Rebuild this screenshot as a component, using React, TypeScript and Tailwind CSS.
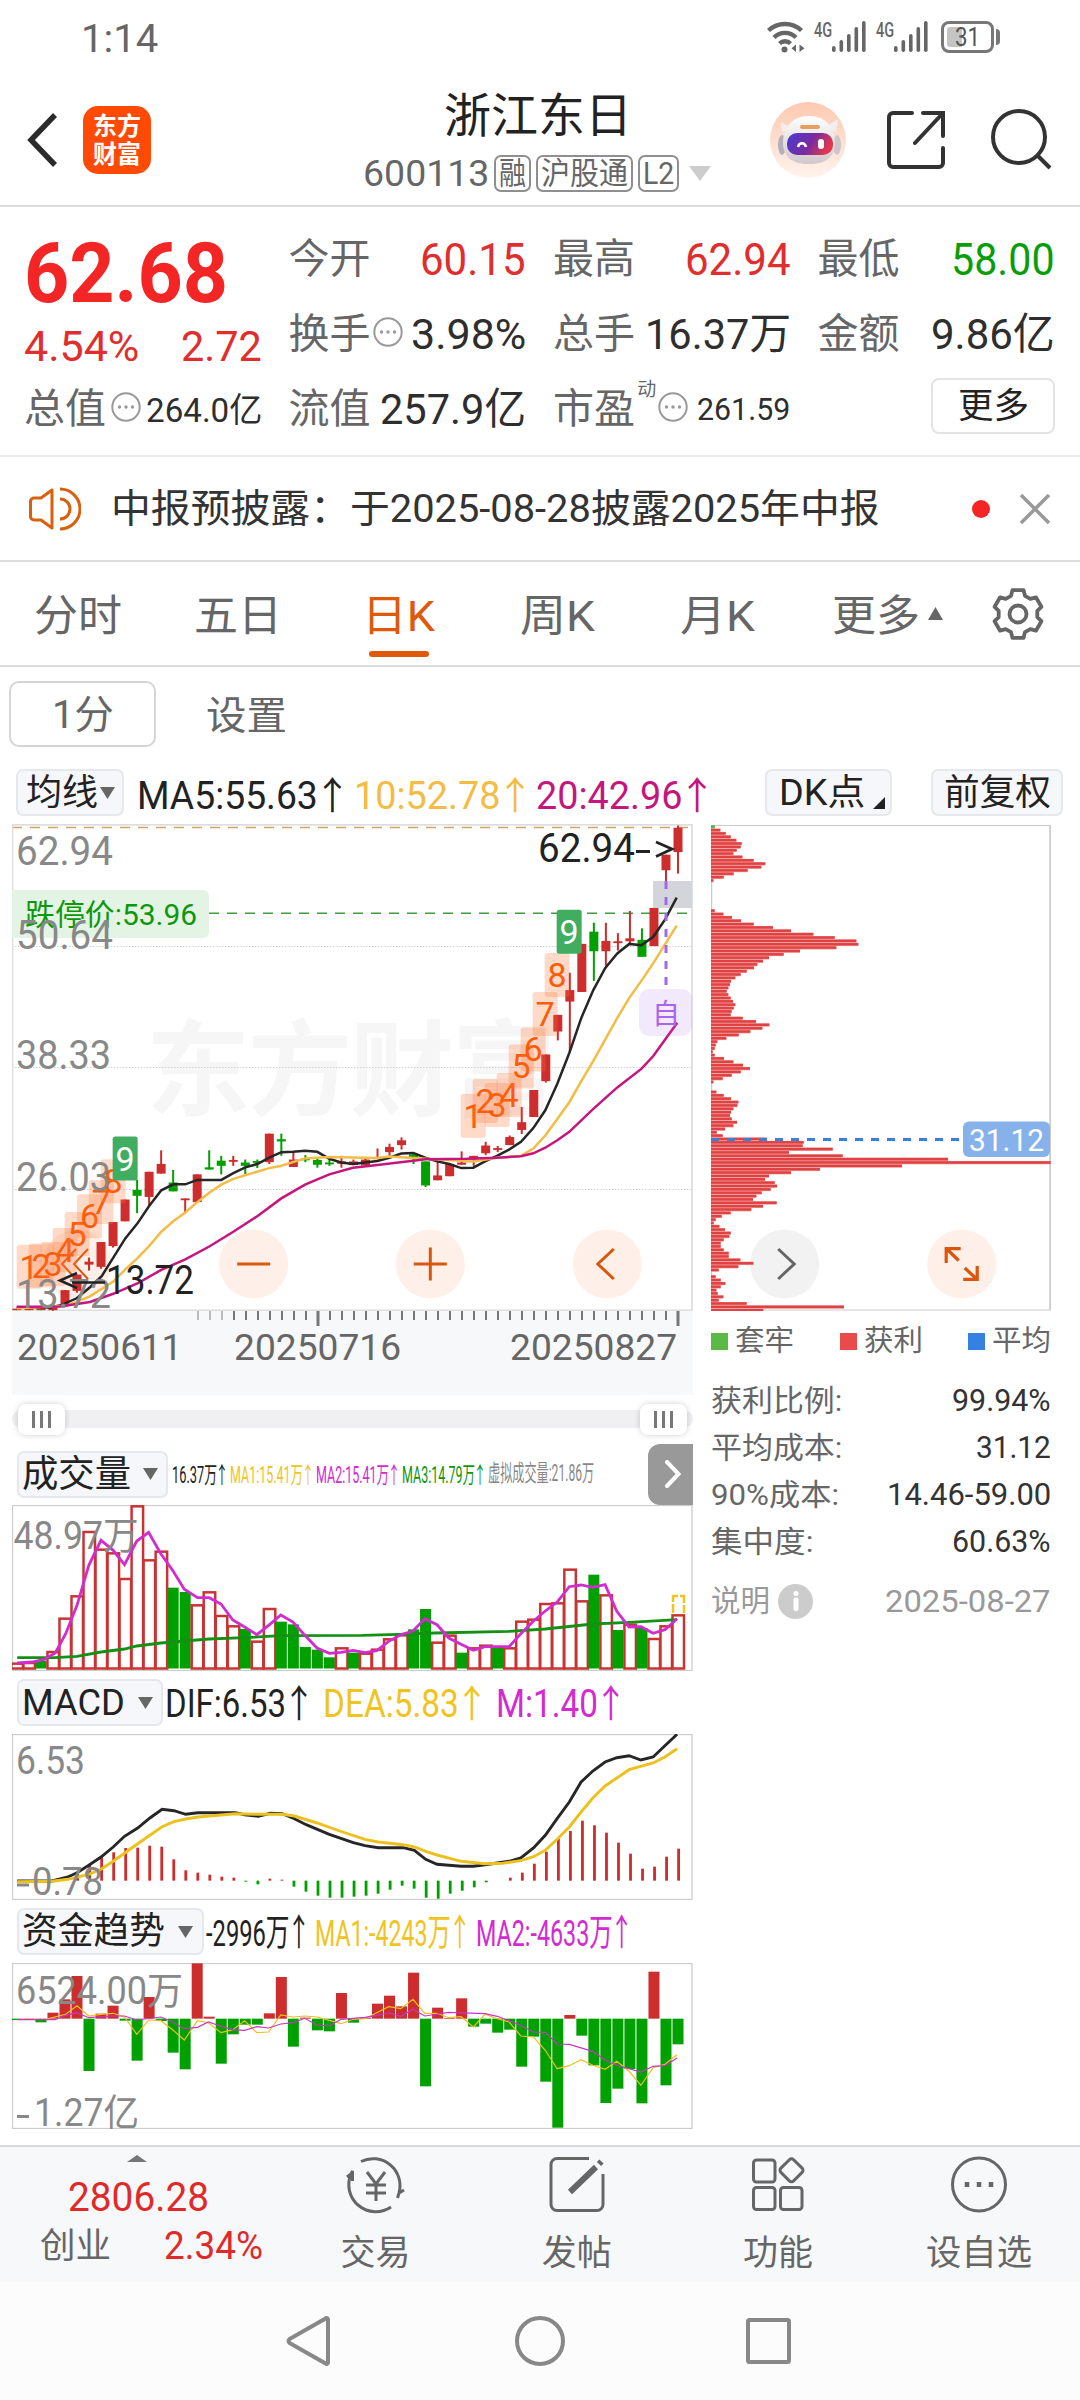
import { useLayoutEffect, useRef, useState } from 'react';
import type { ReactNode } from 'react';

const RED = '#cd2d2d';
const GREEN = '#00a000';
const FONT = 'Roboto, "Noto Sans CJK SC", sans-serif';

type Point = [number, number];

interface FitProps {
  w: number;
  className?: string;
  children: ReactNode;
}

// Squeezes or stretches a line of text horizontally so that it fills `w` pixels.
function Fit({ w, className = '', children }: FitProps) {
  const ref = useRef<HTMLSpanElement>(null);
  const [scale, setScale] = useState(1);

  useLayoutEffect(() => {
    if (ref.current) {
      setScale(w / ref.current.offsetWidth);
    }
  }, [w]);

  return (
    <span className={`block shrink-0 leading-none ${className}`} style={{ width: w }}>
      <span
        ref={ref}
        className="inline-block origin-left whitespace-nowrap leading-none"
        style={{ transform: `scaleX(${scale})` }}
      >
        {children}
      </span>
    </span>
  );
}

function Up() {
  return (
    <span className="ml-[0.08em] inline-flex w-[0.62em] justify-center font-['Noto_Sans_CJK_SC']">↑</span>
  );
}

function Caret({ className = '' }: { className?: string }) {
  return (
    <svg width="15" height="12" viewBox="0 0 15 12" className={className}>
      <path d="M0 0h15L7.5 12z" fill="#666" />
    </svg>
  );
}

function InfoDots({ className = '' }: { className?: string }) {
  return (
    <svg width="30" height="30" viewBox="0 0 30 30" className={`-mt-[6px] shrink-0 ${className}`}>
      <circle cx="15" cy="15" r="13.7" fill="none" stroke="#999" strokeWidth="2" />
      <circle cx="8.5" cy="15" r="1.7" fill="#999" />
      <circle cx="15" cy="15" r="1.7" fill="#999" />
      <circle cx="21.5" cy="15" r="1.7" fill="#999" />
    </svg>
  );
}

/* ---------- status bar and header ---------- */

function Signal() {
  return (
    <div className="flex items-start">
      <Fit w={18} className="-mt-px text-[21px] font-medium text-[#666]">4G</Fit>
      <svg width="35" height="31" viewBox="0 0 35 31" fill="#666">
        <rect x="0" y="25" width="3.6" height="6" rx="1.8" />
        <rect x="7.5" y="19" width="3.6" height="12" rx="1.8" />
        <rect x="15" y="13" width="3.6" height="18" rx="1.8" />
        <rect x="22.5" y="6" width="3.6" height="25" rx="1.8" />
        <rect x="30" y="0" width="3.6" height="31" rx="1.8" />
      </svg>
    </div>
  );
}

function StatusBar() {
  return (
    <div className="flex h-[70px] shrink-0 items-start pl-[81px] pr-[80px] pt-[20px]">
      <Fit w={77} className="text-[39px] text-[#666]">1:14</Fit>
      <div className="ml-auto flex items-start gap-[9px] pt-px">
        <svg width="38" height="32" viewBox="0 0 38 32" fill="none" stroke="#666" strokeWidth="4.4">
          <path d="M1.5 9.5a24 24 0 0 1 33 0" />
          <path d="M7 16.5a15.500 15.500 0 0 1 22 0" />
          <path d="M12.500 22.500a8 8 0 0 1 11 0" />
          <circle cx="17.500" cy="28.500" r="3" fill="#666" stroke="none" />
          <path d="M29 23.500v7.500l-4.500-3.700zM32.500 23.500v7.500l5-3.700z" fill="#666" stroke="none" />
        </svg>
        <Signal />
        <Signal />
        <div className="ml-[3px] flex items-center">
          <div className="relative flex h-[32px] w-[53px] items-center justify-center rounded-[8px] border-[3px] border-[#777]">
            <div className="absolute left-[3px] top-[3px] h-[20px] w-[15px] rounded-l-[3px] bg-[#c4c4c4]" />
            <Fit w={25} className="relative text-[25px] text-[#555]">31</Fit>
          </div>
          <div className="ml-[2px] h-[16px] w-[4px] rounded-r bg-[#777]" />
        </div>
      </div>
    </div>
  );
}

function Robot() {
  return (
    <svg width="76" height="76" viewBox="0 0 76 76">
      <defs>
        <linearGradient id="halo" x1="0" y1="0" x2="0" y2="1">
          <stop offset="0" stopColor="#fdc9b0" />
          <stop offset="1" stopColor="#fff3ed" />
        </linearGradient>
        <linearGradient id="visor" x1="0" y1="0" x2="1" y2="0.3">
          <stop offset="0" stopColor="#4a3bd0" />
          <stop offset="0.6" stopColor="#7a2aa0" />
          <stop offset="1" stopColor="#e0384f" />
        </linearGradient>
        <linearGradient id="helmet" x1="0" y1="0" x2="0" y2="1">
          <stop offset="0" stopColor="#fff" />
          <stop offset="1" stopColor="#cfc8cc" />
        </linearGradient>
      </defs>
      <circle cx="38" cy="38" r="38" fill="url(#halo)" />
      <path d="M12 30l-1-10 10 6zM66 30l2-13-12 8z" fill="#f3eff0" />
      <ellipse cx="12" cy="43" rx="4" ry="10" fill="#b5afbb" />
      <ellipse cx="67" cy="43" rx="4" ry="10" fill="#cfc6cc" />
      <path d="M39 14c17 0 26 12 26 27 0 14-9 21-26 21S13 55 13 41c0-15 9-27 26-27z" fill="url(#helmet)" />
      <rect x="30" y="23" width="20" height="4" rx="2" fill="#e8a05f" />
      <rect x="17" y="31" width="46" height="22" rx="10" fill="url(#visor)" />
      <path d="M28 45c1-5 7-5 8 0" fill="none" stroke="#fff" strokeWidth="2.500" />
      <rect x="48" y="37" width="6" height="10" rx="3" fill="#fff" />
    </svg>
  );
}

function Tag({ w, children }: { w: number; children: ReactNode }) {
  return (
    <span className="flex h-[37px] items-center rounded-[7px] border-2 border-[#8f8f8f] px-[3px] text-[31px] text-[#666]">
      <Fit w={w}>{children}</Fit>
    </span>
  );
}

function Header() {
  return (
    <header className="flex h-[137px] shrink-0 border-b-2 border-[#dcdcdc]">
      <div className="flex w-[340px] items-start pl-[27px] pt-[36px]">
        <svg width="31" height="54" viewBox="0 0 31 54" className="mt-[7px]">
          <path d="M28 2L4 27l24 25" fill="none" stroke="#2b2b2b" strokeWidth="5.500" />
        </svg>
        <div className="ml-[25px] flex h-[68px] w-[68px] flex-col items-center justify-center gap-[3px] rounded-[15px] bg-[#ff4a03] text-[25px] font-bold text-white">
          <Fit w={48}>东方</Fit>
          <Fit w={48}>财富</Fit>
        </div>
      </div>
      <div className="flex w-[396px] flex-col items-center">
        <Fit w={188} className="mt-[22px] text-[47px] text-[#222]">浙江东日</Fit>
        <div className="mr-[2px] mt-[16px] flex items-center gap-[5px]">
          <Fit w={126} className="text-[36px] text-[#666]">600113</Fit>
          <Tag w={27}>融</Tag>
          <Tag w={87}>沪股通</Tag>
          <Tag w={31}>L2</Tag>
          <svg width="22" height="15" viewBox="0 0 22 15" className="ml-[5px]">
            <path d="M0 0h22L11 15z" fill="#ccc" />
          </svg>
        </div>
      </div>
      <div className="flex w-[344px] items-start pl-[34px] pt-[32px]">
        <Robot />
        <svg width="58" height="58" viewBox="0 0 58 58" fill="none" stroke="#333" strokeWidth="4" className="ml-[41px] mt-[9px]">
          <path d="M25 2H6a4 4 0 0 0-4 4v46a4 4 0 0 0 4 4h46a4 4 0 0 0 4-4V37" strokeLinecap="round" />
          <path d="M36 2h20v23M56 2L28 32" strokeLinecap="round" />
        </svg>
        <svg width="61" height="61" viewBox="0 0 61 61" fill="none" stroke="#333" strokeWidth="4" className="ml-[46px] mt-[7px]">
          <circle cx="28" cy="28" r="26" />
          <path d="M47 47l12 12" />
        </svg>
      </div>
    </header>
  );
}

/* ---------- quote ---------- */

function Cell({ label, children }: { label: string; children: ReactNode }) {
  return (
    <div className="flex h-[75px] items-center justify-between text-[42px] text-[#2e2e2e]">
      <Fit w={82} className="text-[41px] text-[#666]">{label}</Fit>
      {children}
    </div>
  );
}

function Quote() {
  return (
    <section className="grid h-[250px] shrink-0 grid-cols-4 gap-x-[27px] border-b-2 border-[#ececec] pl-[24px] pr-[25px] pt-[15px]">
      <div>
        <div className="flex h-[104px] items-center">
          <Fit w={204} className="text-[84px] font-bold text-[#f32525]">62.68</Fit>
        </div>
        <div className="mb-[6px] flex h-[40px] items-center justify-between text-[43px] text-[#e02d2d]">
          <Fit w={115}>4.54%</Fit>
          <Fit w={81}>2.72</Fit>
        </div>
        <Cell label="总值">
          <InfoDots />
          <Fit w={116} className="text-[34px]">264.0亿</Fit>
        </Cell>
      </div>
      <div>
        <Cell label="今开">
          <Fit w={106} className="text-[44px] text-[#e02d2d]">60.15</Fit>
        </Cell>
        <Cell label="换手">
          <InfoDots className="-ml-[6px]" />
          <Fit w={115} className="text-[43px]">3.98%</Fit>
        </Cell>
        <Cell label="流值">
          <Fit w={146} className="text-[43px]">257.9亿</Fit>
        </Cell>
      </div>
      <div>
        <Cell label="最高">
          <Fit w={106} className="text-[44px] text-[#e02d2d]">62.94</Fit>
        </Cell>
        <Cell label="总手">
          <Fit w={146} className="text-[43px]">16.37万</Fit>
        </Cell>
        <Cell label="市盈">
          <span className="-mt-[40px] text-[19px] leading-none text-[#666]">动</span>
          <InfoDots />
          <Fit w={93} className="ml-[7px] text-[31px]">261.59</Fit>
        </Cell>
      </div>
      <div>
        <Cell label="最低">
          <Fit w={104} className="text-[44px] text-[#0a9d0a]">58.00</Fit>
        </Cell>
        <Cell label="金额">
          <Fit w={124} className="text-[43px]">9.86亿</Fit>
        </Cell>
        <div className="flex h-[68px] items-center justify-end">
          <button className="flex h-[56px] w-[124px] items-center justify-center rounded-[8px] border-2 border-[#e4e4e4] text-[35px] text-[#222]">
            <Fit w={71}>更多</Fit>
          </button>
        </div>
      </div>
    </section>
  );
}

function Notice() {
  return (
    <section className="flex h-[105px] shrink-0 items-center border-b-2 border-[#dcdcdc] pl-[29px] pr-[30px]">
      <svg width="52" height="44" viewBox="0 0 52 44" fill="none" stroke="#d9600f" strokeWidth="3">
        <path d="M23 3v38L12 33H5a3.500 3.500 0 0 1-3.500-3.500v-15A3.500 3.500 0 0 1 5 11h7z" strokeLinejoin="round" />
        <path d="M31 2a20 20 0 0 1 0 40M31 12a10 10 0 0 1 0 20" />
      </svg>
      <Fit w={769} className="ml-[30px] mt-[2px] text-[39px] text-[#333]">中报预披露：于2025-08-28披露2025年中报</Fit>
      <span className="ml-auto h-[18px] w-[18px] rounded-full bg-[#f32525]" />
      <svg width="30" height="30" viewBox="0 0 30 30" className="ml-[30px]">
        <path d="M1 1l28 28M29 1L1 29" stroke="#999" strokeWidth="3.500" />
      </svg>
    </section>
  );
}

/* ---------- tabs ---------- */

function Gear() {
  const pts: string[] = [];
  for (let k = 0; k < 6; k++) {
    const base = -90 + 60 * k;
    const corners: Point[] = [[-21, 19.5], [-13, 24.500], [13, 24.500], [21, 19.5]];
    corners.forEach(([deg, r]) => {
      const a = ((base + deg) * Math.PI) / 180;
      pts.push(`${(26 + r * Math.cos(a)).toFixed(1)},${(26 + r * Math.sin(a)).toFixed(1)}`);
    });
  }
  return (
    <svg width="52" height="52" viewBox="0 0 52 52" fill="none" stroke="#666" strokeWidth="3.800">
      <polygon points={pts.join(' ')} strokeLinejoin="round" />
      <circle cx="26" cy="26" r="8.500" />
    </svg>
  );
}

const tabs = [
  { label: '分时', w: 88, cls: 'ml-[34px]' },
  { label: '五日', w: 88, cls: 'ml-[72px]' },
  { label: '日K', w: 73, cls: 'ml-[80px]', active: true },
  { label: '周K', w: 75, cls: 'ml-[85px]' },
  { label: '月K', w: 75, cls: 'ml-[85px]' },
  { label: '更多', w: 88, cls: 'ml-[77px]' },
];

function Tabs() {
  return (
    <nav className="flex h-[105px] shrink-0 items-center border-b-2 border-[#dcdcdc] text-[43px] text-[#666]">
      {tabs.map((tab) => (
        <div key={tab.label} className={`flex h-full flex-col items-center pt-[33px] ${tab.cls}`}>
          <Fit w={tab.w} className={tab.active ? 'text-[#e0580a]' : ''}>{tab.label}</Fit>
          {tab.active ? <span className="mt-[13px] h-[6px] w-[60px] rounded-full bg-[#e0580a]" /> : null}
        </div>
      ))}
      <svg width="15" height="13" viewBox="0 0 15 13" className="ml-[8px]">
        <path d="M0 13h15L7.500 0z" fill="#666" />
      </svg>
      <span className="ml-auto mr-[36px]">
        <Gear />
      </span>
    </nav>
  );
}

function SubTabs() {
  return (
    <div className="flex h-[88px] shrink-0 items-start pl-[9px] pt-[14px] text-[39px] text-[#666]">
      <div className="flex h-[66px] w-[147px] items-center justify-center rounded-[10px] border-2 border-[#d5d5d5] pt-[3px]">
        <Fit w={62}>1分</Fit>
      </div>
      <Fit w={81} className="ml-[50px] mt-[16px]">设置</Fit>
    </div>
  );
}

function Chip({ className, children }: { className: string; children: ReactNode }) {
  return (
    <div className={`flex h-[47px] shrink-0 items-center rounded-[7px] border-2 border-[#e5e8ec] bg-[#f6f7fa] text-[#222] ${className}`}>
      {children}
    </div>
  );
}

function MaRow() {
  return (
    <div className="flex h-[69px] shrink-0 items-start pl-[16px] pt-[14px] text-[38px]">
      <Chip className="w-[108px] pl-[8px] text-[36px]">
        <Fit w={72}>均线</Fit>
        <Caret className="ml-[2px]" />
      </Chip>
      <div className="mt-[5px] flex">
        <Fit w={207} className="ml-[13px] text-[#222]">MA5:55.63<Up /></Fit>
        <Fit w={173} className="ml-[10px] text-[#f3bc45]">10:52.78<Up /></Fit>
        <Fit w={173} className="ml-[9px] text-[#c4167e]">20:42.96<Up /></Fit>
      </div>
      <Chip className="ml-[56px] w-[127px] pl-[12px] pt-px text-[36px]">
        <Fit w={86}>DK点</Fit>
        <svg width="12" height="12" viewBox="0 0 12 12" className="ml-[8px] mt-[20px]">
          <path d="M12 0v12H0z" fill="#222" />
        </svg>
      </Chip>
      <Chip className="ml-[39px] w-[132px] justify-center pt-px text-[36px]">
        <Fit w={107}>前复权</Fit>
      </Chip>
    </div>
  );
}

/* ---------- candlestick chart ---------- */

const BAR_STEP = 12.02;
const barX = (i: number) => 4.9 + BAR_STEP * i;

// price plot data is kept on a 2046 x 1312 grid
const px = (v: number) => v / 3 - 12;
const py = (v: number) => (v - 38) / 2.703;
const toLine = (pts: Point[], fx: (v: number) => number, fy: (v: number) => number) =>
  pts.map(([x, y]) => `${fx(x).toFixed(1)},${fy(y).toFixed(1)}`).join(' ');

// high, body top, body bottom, low, 1 = rising
const candles: number[][] = [
  [1348, 1348, 1352, 1352, 1], [1348, 1348, 1352, 1352, 1], [1347, 1347, 1352, 1352, 1], [1340, 1342, 1352, 1354, 1],
  [1298, 1298, 1337, 1337, 1], [1256, 1256, 1300, 1305, 1], [1210, 1221, 1229, 1245, 1], [1168, 1168, 1235, 1240, 1],
  [1114, 1114, 1179, 1183, 1], [1053, 1053, 1112, 1112, 1], [1000, 1027, 1043, 1090, 0], [978, 978, 1046, 1070, 1],
  [920, 957, 983, 983, 1], [973, 1007, 1031, 1031, 0], [1050, 1050, 1055, 1090, 1], [985, 985, 1060, 1060, 1],
  [920, 966, 972, 972, 0], [935, 948, 962, 985, 0], [935, 946, 951, 962, 1], [945, 953, 962, 985, 0],
  [945, 949, 954, 968, 0], [875, 875, 952, 957, 1], [875, 890, 896, 935, 0], [927, 945, 965, 965, 1],
  [933, 942, 947, 952, 0], [940, 946, 959, 967, 0], [945, 953, 958, 962, 0], [935, 950, 956, 967, 1],
  [945, 950, 960, 960, 1], [943, 945, 961, 961, 1], [915, 938, 944, 944, 1], [902, 911, 925, 935, 1],
  [885, 893, 906, 918, 1], [927, 931, 939, 957, 0], [950, 950, 1015, 1019, 0], [950, 988, 1001, 1001, 1],
  [957, 957, 990, 990, 1], [923, 953, 959, 959, 1], [935, 935, 945, 962, 1], [897, 907, 928, 933, 1],
  [908, 914, 919, 925, 1], [880, 884, 906, 906, 1], [803, 844, 865, 876, 1], [757, 757, 830, 830, 1],
  [661, 661, 733, 737, 1], [554, 554, 599, 623, 1], [440, 487, 518, 655, 1], [362, 362, 492, 492, 1],
  [305, 329, 382, 462, 0], [305, 354, 382, 421, 1], [333, 355, 360, 380, 1], [273, 347, 355, 360, 1],
  [320, 351, 397, 397, 0], [265, 265, 368, 368, 1], [121, 121, 163, 192, 1], [42, 48, 114, 172, 1],
];

const ma5: Point[] = [
  [50, 1345], [150, 1345], [185, 1338], [230, 1320], [270, 1290], [305, 1260], [340, 1210], [376, 1158], [412, 1118],
  [448, 1070], [484, 1028], [520, 1012], [556, 1012], [592, 1000], [664, 1000], [700, 982], [736, 966], [772, 957],
  [808, 940], [844, 925], [880, 924], [915, 921], [952, 924], [988, 943], [1023, 953], [1059, 957], [1096, 953],
  [1132, 949], [1168, 940], [1204, 929], [1240, 927], [1276, 940], [1312, 950], [1348, 957], [1384, 968], [1420, 967],
  [1455, 950], [1491, 935], [1527, 918], [1563, 897], [1600, 860], [1636, 812], [1672, 740], [1708, 657], [1744, 562],
  [1780, 487], [1816, 427], [1852, 388], [1888, 362], [1924, 366], [1960, 343], [1996, 295], [2030, 237],
];
const ma10: Point[] = [
  [50, 1347], [200, 1340], [270, 1315], [340, 1275], [376, 1242], [412, 1212], [448, 1178], [484, 1140], [520, 1112],
  [556, 1088], [592, 1060], [628, 1035], [664, 1013], [700, 997], [808, 968], [844, 962], [915, 942], [988, 938],
  [1132, 941], [1168, 937], [1280, 943], [1420, 950], [1491, 940], [1563, 935], [1600, 915], [1636, 880], [1672, 835],
  [1708, 790], [1744, 733], [1780, 678], [1816, 620], [1852, 562], [1888, 508], [1924, 462], [1960, 414], [1996, 362],
  [2030, 313],
];
const ma20: Point[] = [
  [50, 1343], [180, 1342], [270, 1330], [340, 1308], [412, 1280], [484, 1243], [556, 1215], [628, 1180], [700, 1140],
  [772, 1098], [844, 1050], [915, 1013], [988, 985], [1059, 967], [1132, 960], [1240, 948], [1276, 944], [1400, 943],
  [1491, 940], [1563, 936], [1600, 928], [1636, 913], [1672, 893], [1708, 870], [1780, 808], [1852, 750], [1924, 700],
  [1960, 665], [1996, 620], [2032, 575],
];

// left edge and top of the nine-turn markers
const turns: Point[][] = [
  [[50, 1175], [86, 1172], [122, 1168], [158, 1130], [194, 1087], [231, 1039], [266, 1000], [302, 944], [338, 883]],
  [[1382, 767], [1418, 727], [1454, 738], [1490, 711], [1526, 634], [1562, 588], [1598, 492], [1634, 387], [1670, 270]],
];

interface LabelProps {
  x: number;
  y: number;
  w: number;
  size: number;
  fill?: string;
  children: string;
}

function Label({ x, y, w, size, fill = '#888', children }: LabelProps) {
  return (
    <text x={x} y={y} fontSize={size} fill={fill} textLength={w} lengthAdjust="spacingAndGlyphs" fontFamily={FONT}>
      {children}
    </text>
  );
}

interface RoundButtonProps {
  cx: number;
  d: string;
  fill?: string;
  stroke?: string;
  width?: number;
}

function RoundButton({ cx, d, fill = '#fef0e8', stroke = '#d9560c', width = 3 }: RoundButtonProps) {
  return (
    <g transform={`translate(${cx} 440)`}>
      <circle r="34.500" fill={fill} />
      <path d={d} fill="none" stroke={stroke} strokeWidth={width} />
    </g>
  );
}

function PriceChart() {
  return (
    <svg width="681" height="487" viewBox="0 0 681 487" className="block">
      <text x="134" y="284" fontSize="104" fontWeight="700" fill="#f6f6f6" textLength="410" fontFamily={FONT}>东方财富</text>
      {[122.5, 243.500, 365.500].map((y) => (
        <path key={y} d={`M0 ${y}H681`} stroke="#d0d0d0" strokeWidth="1" strokeDasharray="1.500 1.500" />
      ))}
      <path d="M0 3.500H681" stroke="#c9a86a" strokeWidth="1.500" strokeDasharray="10 8" />
      <path d="M197 89.300H681" stroke="#3f9d3f" strokeWidth="1.400" strokeDasharray="10 8" />
      <rect x="0.500" y="0.800" width="679.5" height="485.500" fill="none" stroke="#dedede" strokeWidth="1.800" />
      <path d="M-6 66H191a6 6 0 0 1 6 6V108a6 6 0 0 1-6 6H-6z" fill="#e3f4e5" />
      <Label x={13} y={101} w={172} size={30} fill="#0b980b">跌停价:53.96</Label>
      <rect x="641" y="57" width="39" height="27" fill="#d2d6da" />

      <RoundButton cx={65} d="M-1-15L-15 0-1 15M11-15L-3 0 11 15" width={2} />
      <RoundButton cx={241.700} d="M-16.500 0H16.500" />
      <RoundButton cx={418.300} d="M-16.500 0H16.500M0-16.500V16.500" />
      <RoundButton cx={595.300} d="M6.500-15L-9.500 0 6.500 15" />

      {candles.map(([high, top, bottom, low, up], i) => {
        const color = up ? RED : GREEN;
        return (
          <g key={i} fill={color}>
            <rect x={barX(i) - 1} y={py(high)} width="2" height={Math.max(py(low) - py(high), 1)} />
            <rect x={barX(i) - 4.500} y={py(top)} width="9" height={py(bottom) - py(top)} />
          </g>
        );
      })}

      <polyline points={toLine(ma5, px, py)} fill="none" stroke="#262626" strokeWidth="2.500" />
      <polyline points={toLine(ma10, px, py)} fill="none" stroke="#f3bc45" strokeWidth="2.500" />
      <polyline points={toLine(ma20, px, py)} fill="none" stroke="#c4167e" strokeWidth="2.500" />

      {turns.map((turn, t) =>
        turn.map(([x, y], i) => {
          const last = i === 8;
          return (
            <g key={`${t}-${i}`}>
              <rect x={px(x)} y={py(y)} width="25" height="44" rx="2.500" fill={last ? '#40ad61' : '#ff7538'} fillOpacity={last ? 1 : 0.27} />
              <text x={px(x) + 12.500} y={py(y) + 34} fontSize="34" textAnchor="middle" fill={last ? '#fff' : '#fb5c0a'} fontFamily={FONT}>
                {i + 1}
              </text>
            </g>
          );
        }),
      )}

      <Label x={4} y={41} w={97} size={41}>62.94</Label>
      <Label x={4} y={124.500} w={97} size={41}>50.64</Label>
      <Label x={4} y={245} w={95} size={41}>38.33</Label>
      <Label x={4} y={366.500} w={95} size={41}>26.03</Label>
      <Label x={4} y={484} w={95} size={41}>13.72</Label>

      <path d="M654 57V164" stroke="#a865ec" strokeWidth="3" strokeDasharray="8 8" />
      <rect x="627" y="165" width="53" height="47" rx="10" fill="#a865ec" fillOpacity="0.14" />
      <text x="654" y="200" fontSize="28" textAnchor="middle" fill="#a865ec" fontFamily={FONT}>自</text>

      <path d="M65 449L48 456.500l17 7.500M60 458.500H93" fill="none" stroke="#222" strokeWidth="2.600" />
      <Label x={94} y={470} w={88} size={40} fill="#222">13.72</Label>
      <Label x={526} y={37.500} w={97} size={41} fill="#222">62.94</Label>
      <path d="M624 27.500H638M644 18L660 25l-16 7.500" fill="none" stroke="#222" strokeWidth="2.800" />
    </svg>
  );
}

function DateAxis() {
  const ticks = Array.from({ length: 41 }, (_, i) => 186 + 12 * i);
  return (
    <svg width="681" height="84" viewBox="0 0 681 84" className="block bg-[#f7f8fa]">
      {ticks.map((x, i) => {
        const major = x === 306 || x === 666;
        return (
          <rect key={x} x={x - (major ? 1.500 : 1)} y="0" width={major ? 3 : 2} height={major ? 15 : 9} fill={i < 3 ? '#bbb' : '#777'} />
        );
      })}
      <Label x={5} y={49} w={165} size={36} fill="#666">20250611</Label>
      <Label x={222} y={49} w={167} size={36} fill="#666">20250716</Label>
      <Label x={498} y={49} w={167} size={36} fill="#666">20250827</Label>
    </svg>
  );
}

/* ---------- chip distribution ---------- */

const chips = [
  42, 59, 75, 90, 107, 123, 120, 108, 98, 125, 159, 194, 182, 141, 99, 69, 38, 0, 0, 0, 0, 0, 0, 0, 0, 42, 68, 94, 121,
  159, 217, 271, 338, 402, 467, 473, 407, 298, 249, 205, 187, 170, 160, 138, 120, 104, 91, 88, 83, 78, 83, 90, 97, 104,
  99, 93, 90, 126, 166, 206, 185, 149, 114, 77, 50, 45, 42, 36, 42, 70, 98, 127, 148, 120, 93, 66, 38, 0, 0, 47, 69, 91,
  113, 110, 98, 91, 88, 93, 109, 98, 73, 48, 66, 198, 309, 306, 396, 265, 426, 742, 1050, 604, 358, 271, 205, 193, 222,
  229, 210, 183, 167, 157, 228, 187, 152, 90, 63, 45, 39, 56, 73, 90, 86, 69, 60, 60, 69, 84, 84, 119, 158, 113, 54, 0,
  45, 60, 74, 60, 47, 51, 68, 54, 138, 430, 188,
];

function ChipChart() {
  const step = 483.500 / (chips.length - 1);
  return (
    <svg width="340" height="487" viewBox="0 0 340 487" className="block">
      <path d="M0.500 1V486" stroke="#ccc" strokeWidth="1.500" />
      <path d="M0 1.500H340M0 486H340" fill="none" stroke="#ccc" strokeWidth="1" />
      <path d="M339.100 1V486" stroke="#ccc" strokeWidth="1.800" />
      <RoundButton cx={73.700} fill="#f2f2f2" stroke="#666" d="M-6.500-15L9.500 0-6.500 15" />
      <RoundButton cx={250.700} d="M-15.500-1V-15.300H-1M-15-15L-3-3.500M15.500 2V15.300H1.500M15 15L3 4" width={3.200} />
      {chips.map((end, i) =>
        end ? (
          <g key={i}>
            <rect x="0" y={1.200 + i * step} width={(end - 31) / 3} height={step} fill={i ? '#f48f8f' : '#5bb748'} />
            <rect x="0" y={1.500 + i * step} width={(end - 31) / 3} height="2.400" fill={i ? '#df4242' : '#5bb748'} />
          </g>
        ) : null,
      )}
      <path d="M0 315.500H248" stroke="#3b80d8" strokeWidth="3" strokeDasharray="8 8" />
      <rect x="252" y="297.500" width="87" height="35.500" rx="6" fill="#86b1ea" />
      <Label x={258} y={326.500} w={75} size={31} fill="#fff">31.12</Label>
    </svg>
  );
}

const legend = [
  { label: '套牢', dot: 'bg-[#5bb948]' },
  { label: '获利', dot: 'bg-[#e84b49]' },
  { label: '平均', dot: 'bg-[#3481e2]' },
];

const chipStats = [
  { label: '获利比例:', lw: 131, value: '99.94%', w: 99 },
  { label: '平均成本:', lw: 131, value: '31.12', w: 75 },
  { label: '90%成本:', lw: 128, value: '14.46-59.00', w: 164 },
  { label: '集中度:', lw: 102, value: '60.63%', w: 99 },
];

function ChipPanel() {
  return (
    <aside className="ml-[18px] w-[340px]">
      <ChipChart />
      <div className="mt-[13px] flex justify-between">
        {legend.map(({ label, dot }) => (
          <div key={label} className="flex h-[34px] items-center text-[29px] text-[#666]">
            <span className={`mr-[7px] h-[17px] w-[17px] ${dot}`} />
            <Fit w={59}>{label}</Fit>
          </div>
        ))}
      </div>
      <dl className="mt-[19px]">
        {chipStats.map(({ label, lw, value, w }) => (
          <div key={label} className="flex h-[47px] items-center justify-between text-[30px]">
            <dt className="text-[#666]"><Fit w={lw}>{label}</Fit></dt>
            <dd className="text-[#333]"><Fit w={w} className="text-[31px]">{value}</Fit></dd>
          </div>
        ))}
      </dl>
      <div className="mt-[10px] flex h-[52px] items-center text-[30px] text-[#999]">
        <Fit w={59}>说明</Fit>
        <span className="ml-[8px] flex h-[35px] w-[35px] items-center justify-center rounded-full bg-[#ccc]">
          <svg width="6" height="20" viewBox="0 0 6 20" fill="#fff">
            <circle cx="3" cy="2.500" r="2.500" />
            <rect x="0.500" y="6.500" width="5" height="13.500" rx="2" />
          </svg>
        </span>
        <Fit w={166} className="ml-auto text-[32px]">2025-08-27</Fit>
      </div>
    </aside>
  );
}

/* ---------- indicators ---------- */

const ix = (v: number) => v / 2.208 - 12;

function Handle() {
  return (
    <div className="flex h-[31px] w-[47px] items-center justify-center gap-[5px] rounded-[8px] bg-white shadow-[0_0_6px_rgba(0,0,0,0.18)]">
      <span className="h-[17px] w-[3px] bg-[#777]" />
      <span className="h-[17px] w-[3px] bg-[#777]" />
      <span className="h-[17px] w-[3px] bg-[#777]" />
    </div>
  );
}

function RangeSlider() {
  return (
    <div className="flex h-[48px] items-center">
      <div className="flex h-[18px] w-full items-center justify-between rounded-full bg-[#f0f0f3] px-[6px]">
        <Handle />
        <Handle />
      </div>
    </div>
  );
}

// top of each column, negative marks a falling day
const volumes = [
  852, 850, -846, 817, 717, 650, 457, 510, 521, 598, 380, 542, 516, -627, -640, 677, 638, 709, 740, -751, 786, 688, -729,
  -737, -805, -813, -836, 806, -822, 822, 810, 779, 767, -752, -691, 789, 768, -822, 806, 798, -806, 806, 726, 720, 673,
  671, 570, 665, -588, 647, -754, 735, -748, 778, 740, 707,
];
const volumeMa: Point[] = [
  [38, 853], [70, 850], [96, 843], [122, 823], [145, 765], [170, 680], [196, 560], [223, 485], [250, 515], [275, 558],
  [302, 487], [328, 461], [355, 525], [381, 575], [407, 632], [436, 657], [462, 657], [488, 676], [514, 724], [540, 745],
  [567, 768], [593, 740], [620, 709], [647, 730], [673, 770], [700, 808], [727, 824], [753, 821], [780, 815], [806, 822],
  [832, 816], [858, 788], [885, 768], [912, 757], [938, 720], [965, 738], [991, 778], [1018, 797], [1045, 815],
  [1071, 804], [1124, 804], [1150, 765], [1178, 727], [1204, 697], [1230, 670], [1257, 624], [1283, 619], [1309, 626],
  [1336, 618], [1362, 698], [1389, 745], [1415, 744], [1442, 764], [1468, 753], [1495, 720],
];
const volumeMa3: Point[] = [
  [38, 837], [122, 837], [170, 833], [223, 820], [275, 811], [302, 802], [355, 793], [407, 787], [462, 781], [540, 777],
  [620, 771], [800, 770], [880, 767], [960, 763], [1124, 758], [1204, 751], [1309, 736], [1389, 731], [1495, 723],
];

function Frame({ children }: { children: ReactNode }) {
  return (
    <svg width="681" height="166" viewBox="0 0 681 166" className="block">
      <rect x="0.500" y="0.500" width="679.5" height="165" fill="none" stroke="#ccc" strokeWidth="1.300" />
      {children}
    </svg>
  );
}

function VolumeChart() {
  const vy = (v: number) => (v - 379) / 3;
  return (
    <Frame>
      {volumes.map((v, i) => {
        const top = vy(Math.abs(v));
        return v < 0 ? (
          <rect key={i} x={barX(i) - 5.500} y={top} width="11" height={163.500 - top} fill={GREEN} />
        ) : (
          <rect key={i} x={barX(i) - 5.500} y={top + 1} width="11.500" height={162.500 - top} fill="#fff" stroke="#c83434" strokeWidth="2.500" />
        );
      })}
      <path d={`M${barX(55) - 5} 108V91H${barX(55) + 6}V108`} fill="none" stroke="#f0c31e" strokeWidth="2.500" strokeDasharray="11 2" strokeDashoffset="2" />
      <polyline points={toLine(volumeMa3, ix, vy)} fill="none" stroke="#149014" strokeWidth="2.800" />
      <polyline points={toLine(volumeMa, ix, vy)} fill="none" stroke="#d22bd0" strokeWidth="2.800" />
      <Label x={1.500} y={43.500} w={125} size={38}>48.97万</Label>
    </Frame>
  );
}

const macdBars = [
  636, 636, 636, 633, 625, 612, 588, 565, 551, 538, 537, 531, 534, 572, 605, 612, 618, 624, 627, 639, 647, 630, 633, 654,
  669, 681, 687, 687, 684, 681, 675, 663, 651, 660, 687, 690, 675, 666, 656, 641, 636, 627, 612, 585, 549, 510, 487, 456,
  470, 492, 522, 555, 600, 594, 564, 540,
];
const dif: Point[] = [
  [38, 637], [115, 637], [150, 625], [170, 612], [196, 590], [223, 565], [250, 535], [275, 503], [304, 478], [331, 448],
  [358, 422], [384, 426], [410, 437], [437, 432], [520, 432], [540, 438], [570, 443], [597, 434], [623, 435], [650, 450],
  [676, 468], [727, 497], [780, 522], [806, 531], [835, 537], [890, 537], [915, 545], [940, 572], [965, 587],
  [1018, 593], [1045, 593], [1071, 588], [1124, 578], [1150, 568], [1178, 538], [1204, 500], [1230, 450], [1257, 400],
  [1283, 340], [1309, 307], [1336, 280], [1362, 267], [1389, 261], [1415, 274], [1442, 265], [1468, 231], [1495, 197],
];
const dea: Point[] = [
  [38, 639], [115, 638], [150, 632], [196, 617], [223, 602], [250, 578], [304, 525], [358, 474], [384, 459], [410, 451],
  [437, 445], [520, 435], [570, 437], [623, 437], [650, 442], [700, 463], [750, 487], [806, 512], [835, 520], [890, 528],
  [915, 535], [940, 548], [965, 559], [1018, 578], [1071, 585], [1110, 584], [1150, 576], [1178, 564], [1204, 545],
  [1230, 512], [1257, 475], [1283, 430], [1309, 388], [1336, 352], [1389, 303], [1442, 283], [1468, 265], [1495, 240],
];

function MacdChart() {
  const my = (v: number) => (v - 196) / 3;
  const zero = my(636);
  return (
    <Frame>
      {macdBars.map((v, i) => (
        <rect
          key={i}
          x={barX(i) - 0.800}
          y={Math.min(my(v), zero)}
          width="2.800"
          height={Math.abs(my(v) - zero)}
          fill={v > 636 ? GREEN : RED}
        />
      ))}
      <polyline points={toLine(dif, ix, my)} fill="none" stroke="#262626" strokeWidth="2.900" />
      <polyline points={toLine(dea, ix, my)} fill="none" stroke="#ecc11e" strokeWidth="2.900" />
      <Label x={4} y={39.500} w={69} size={38}>6.53</Label>
      <path d="M5 151H17" stroke="#888" strokeWidth="3" />
      <Label x={20} y={161} w={71} size={38}>0.78</Label>
    </Frame>
  );
}

const funds = [
  364, 363, 371, 342, 302, 232, 517, 345, 321, 366, 486, 295, 367, 462, 512, 194, 354, 495, 407, 378, 378, 344, 235, 444,
  357, 395, 398, 283, 372, 357, 315, 291, 323, 222, 563, 327, 358, 299, 384, 375, 402, 393, 504, 414, 549, 687, 349, 411,
  500, 613, 570, 511, 614, 219, 560, 437,
];
const fundMa1: Point[] = [
  [38, 362], [100, 362], [145, 347], [170, 321], [196, 352], [223, 347], [250, 344], [275, 355], [302, 407], [328, 364],
  [355, 366], [381, 393], [407, 424], [436, 366], [460, 372], [488, 402], [514, 393], [540, 366], [567, 402], [593, 400],
  [620, 349], [647, 355], [673, 352], [700, 355], [727, 365], [753, 375], [780, 362], [806, 360], [832, 342], [858, 324],
  [885, 330], [912, 302], [938, 344], [965, 344], [991, 357], [1018, 354], [1045, 385], [1071, 347], [1098, 360],
  [1124, 370], [1150, 412], [1178, 415], [1204, 455], [1230, 510], [1257, 501], [1283, 483], [1309, 500], [1336, 512],
  [1362, 488], [1389, 518], [1415, 560], [1442, 507], [1468, 497], [1495, 468],
];
const fundMa2: Point[] = [
  [38, 363], [122, 363], [145, 350], [170, 342], [196, 357], [250, 352], [275, 352], [302, 364], [355, 355], [381, 370],
  [407, 390], [436, 386], [460, 370], [488, 383], [514, 393], [540, 395], [567, 384], [593, 388], [620, 376], [647, 372],
  [673, 359], [700, 379], [727, 382], [753, 362], [806, 356], [832, 350], [858, 343], [885, 353], [912, 332], [938, 352],
  [991, 341], [1071, 345], [1098, 353], [1150, 380], [1178, 400], [1204, 401], [1230, 436], [1257, 437], [1309, 458],
  [1336, 484], [1362, 500], [1415, 520], [1442, 503], [1468, 501], [1495, 478],
];

function FundChart() {
  const fy = (v: number) => (v - 193) / 3;
  const zero = fy(360);
  return (
    <Frame>
      {funds.map((v, i) => (
        <rect
          key={i}
          x={barX(i) - 5.500}
          y={Math.min(fy(v), zero)}
          width="11"
          height={Math.abs(fy(v) - zero)}
          fill={v > 360 && i !== 1 ? GREEN : RED}
        />
      ))}
      <polyline points={toLine(fundMa1, ix, fy)} fill="none" stroke="#ecc11e" strokeWidth="1.200" />
      <polyline points={toLine(fundMa2, ix, fy)} fill="none" stroke="#c736c7" strokeWidth="1.200" />
      <Label x={4} y={40.500} w={167} size={38}>6524.00万</Label>
      <path d="M5 153.500H17" stroke="#888" strokeWidth="3" />
      <Label x={22} y={162.500} w={105} size={38}>1.27亿</Label>
    </Frame>
  );
}

function Indicators() {
  return (
    <>
      <div className="flex h-[62px] items-center">
        <Chip className="ml-[5px] w-[151px] pl-[3px] text-[37px]">
          <Fit w={109}>成交量</Fit>
          <Caret className="ml-[12px]" />
        </Chip>
        <div className="flex gap-[4px] pl-[4px] text-[23px]">
          <Fit w={54} className="text-[#222]">16.37万<Up /></Fit>
          <Fit w={82} className="text-[#f0c31e]">MA1:15.41万<Up /></Fit>
          <Fit w={82} className="text-[#d22bd0]">MA2:15.41万<Up /></Fit>
          <Fit w={82} className="text-[#109510]">MA3:14.79万<Up /></Fit>
          <Fit w={106} className="text-[#888]">虚拟成交量:21.86万</Fit>
        </div>
        <div className="ml-auto flex h-[61px] w-[45px] items-center justify-center rounded-l-[12px] bg-[#999]">
          <svg width="18" height="28" viewBox="0 0 18 28" className="ml-[4px]">
            <path d="M3 2l11.500 12L3 26" fill="none" stroke="#fff" strokeWidth="4" strokeLinecap="round" />
          </svg>
        </div>
      </div>
      <VolumeChart />
      <div className="flex h-[63px] items-center text-[38px]">
        <Chip className="ml-[5px] w-[146px] pl-[3px]">
          <Fit w={103} className="text-[37px]">MACD</Fit>
          <Caret className="ml-[13px]" />
        </Chip>
        <Fit w={144} className="ml-[2px] text-[#222]">DIF:6.53<Up /></Fit>
        <Fit w={159} className="ml-[14px] text-[#f0c31e]">DEA:5.83<Up /></Fit>
        <Fit w={125} className="ml-[14px] text-[#d22bd0]">M:1.40<Up /></Fit>
      </div>
      <MacdChart />
      <div className="flex h-[63px] items-center text-[37px]">
        <Chip className="ml-[5px] w-[187px] pl-[3px] text-[37px]">
          <Fit w={143}>资金趋势</Fit>
          <Caret className="ml-[13px]" />
        </Chip>
        <Fit w={100} className="ml-[2px] text-[#222]">-2996万<Up /></Fit>
        <Fit w={152} className="ml-[9px] text-[#f0c31e]">MA1:-4243万<Up /></Fit>
        <Fit w={153} className="ml-[9px] text-[#d22bd0]">MA2:-4633万<Up /></Fit>
      </div>
      <FundChart />
    </>
  );
}

/* ---------- bottom bars ---------- */

const actions = [
  {
    label: '交易',
    w: 70,
    icon: (
      <>
        <path d="M17 5.500A27 27 0 0 1 55 37M55 37l5-3M55 37l-1.500 5" />
        <path d="M47 51A27 27 0 0 1 7 18M7 18l-4 3M7 18l1.500-3v10" />
        <path d="M23 16l9 12 9-12M22 29h20M22 37h20M32 28v17" />
      </>
    ),
  },
  {
    label: '发帖',
    w: 70,
    icon: (
      <>
        <path d="M44 2.500H12a6 6 0 0 0-6 6v40a6 6 0 0 0 6 6h40a6 6 0 0 0 6-6V18" />
        <path d="M51 11L25 36M56.500 5.500L54 8" strokeWidth="6" />
      </>
    ),
  },
  {
    label: '功能',
    w: 70,
    icon: (
      <>
        <rect x="7.500" y="4" width="21.500" height="22" rx="3" />
        <rect x="7.500" y="31.500" width="21.500" height="22" rx="3" />
        <rect x="34.500" y="31.500" width="21.500" height="22" rx="3" />
        <rect x="36" y="5.500" width="18" height="18" rx="3" transform="rotate(45 45.500 15)" />
      </>
    ),
  },
  {
    label: '设自选',
    w: 106,
    icon: (
      <>
        <circle cx="32" cy="28.500" r="26.500" />
        <path d="M20 26v5M32 26v5M44 26v5" strokeWidth="4.500" />
      </>
    ),
  },
];

function BottomBar() {
  return (
    <footer className="mt-auto flex h-[137px] shrink-0 border-t-2 border-[#d6d9dd] bg-[#f7f8fa]">
      <div className="flex w-[275px] flex-col items-center pt-[8px]">
        <svg width="20" height="7" viewBox="0 0 20 7">
          <path d="M0 7h20L10 0z" fill="#777" />
        </svg>
        <Fit w={141} className="ml-[2px] mt-[15px] text-[41px] text-[#e02a2a]">2806.28</Fit>
        <div className="mt-[9px] flex w-full items-center pl-[40px] text-[35px]">
          <Fit w={71} className="text-[#666]">创业</Fit>
          <Fit w={99} className="ml-[53px] text-[38px] text-[#e02a2a]">2.34%</Fit>
        </div>
      </div>
      {actions.map(({ label, w, icon }) => (
        <div key={label} className="flex w-[201.300px] flex-col items-center pt-[9px] text-[35px] text-[#666]">
          <svg width="64" height="58" viewBox="0 0 64 58" fill="none" stroke="#666" strokeWidth="3">
            {icon}
          </svg>
          <Fit w={w} className="mt-[22px]">{label}</Fit>
        </div>
      ))}
    </footer>
  );
}

function SystemNav() {
  return (
    <div className="flex h-[118px] shrink-0 items-start bg-[#fcfcfc] pl-[286px] pt-[33px]">
      <svg width="506" height="52" viewBox="0 0 506 52" fill="none" stroke="#888" strokeWidth="4">
        <path d="M42 4.500v43a1.500 1.500 0 0 1-2.500 1L3.500 28a3 3 0 0 1 0-4L39.500 3.500a1.500 1.500 0 0 1 2.500 1z" />
        <circle cx="254" cy="26" r="23" />
        <rect x="462" y="5" width="41" height="42" rx="1.500" />
      </svg>
    </div>
  );
}

export default function App() {
  return (
    <div
      className="flex h-[2400px] w-[1080px] flex-col overflow-hidden bg-white font-[Roboto,'Noto_Sans_CJK_SC',sans-serif]"
      lang="zh-CN"
    >
      <StatusBar />
      <Header />
      <Quote />
      <Notice />
      <Tabs />
      <SubTabs />
      <MaRow />
      <main className="flex pl-[12px]">
        <div className="w-[681px] shrink-0">
          <PriceChart />
          <DateAxis />
          <RangeSlider />
          <Indicators />
        </div>
        <ChipPanel />
      </main>
      <BottomBar />
      <SystemNav />
    </div>
  );
}
